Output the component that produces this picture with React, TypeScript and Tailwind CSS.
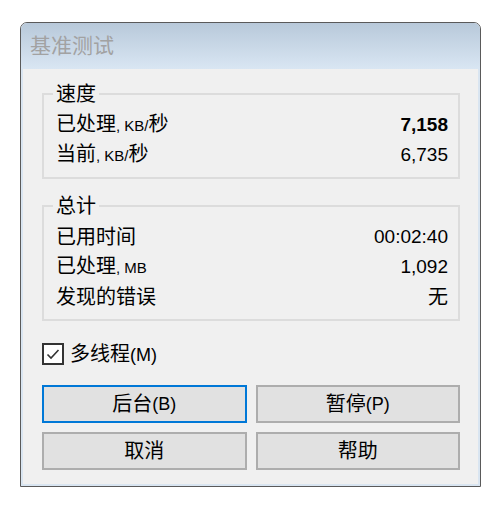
import React from "react";

const FONT = "font-['Liberation_Sans','Noto_Sans_CJK_SC',sans-serif]";

function Unit({ children }: { children: React.ReactNode }) {
  return <span className="text-[15px]">{children}</span>;
}

function Row({ label, value, bold }: { label: React.ReactNode; value: React.ReactNode; bold?: boolean }) {
  return (
    <div className="flex h-[30px] items-center justify-between pl-[3px]">
      <span className="text-[20px] leading-[30px]">{label}</span>
      <span className={`text-[19px] leading-[30px] ${bold ? "font-bold" : ""}`}>{value}</span>
    </div>
  );
}

function Group({ title, children }: { title: string; children: React.ReactNode }) {
  return (
    <div className="border-2 border-[#dcdcdc] pb-[7px] pl-[9px] pr-[10px]">
      <div className="-mt-[13px] w-fit bg-[#f0f0f0] px-[3px] text-[20px] leading-[24px]">{title}</div>
      <div className="mt-[4px]">{children}</div>
    </div>
  );
}

function Btn({ children, focused }: { children: React.ReactNode; focused?: boolean }) {
  return (
    <button
      className={`flex h-[38px] items-center justify-center border-2 bg-[#e1e1e1] text-[20px] text-black ${
        focused ? "border-[#0078d7]" : "border-[#adadad]"
      }`}
    >
      {children}
    </button>
  );
}

export default function App() {
  return (
    <div className={`min-h-[510px] bg-white pl-[20px] pt-[22px] text-black ${FONT}`}>
      <div className="w-[461px] overflow-hidden rounded-t-[7px] border border-[#5a5a5a]">
        <div className="flex h-[46px] items-center bg-gradient-to-b from-[#b8c9da] to-[#d9e6f3] pl-[9px] text-[21px] text-[#a2a2a2]">
          基准测试
        </div>
        <div className="border-x-2 border-b-2 border-[#d9e5f1] bg-[#f0f0f0] pb-[14px] pl-[19px] pr-[18px] pt-[24px]">
          <Group title="速度">
            <Row
              label={
                <>
                  已处理<Unit>, KB/</Unit>秒
                </>
              }
              value="7,158"
              bold
            />
            <Row
              label={
                <>
                  当前<Unit>, KB/</Unit>秒
                </>
              }
              value="6,735"
            />
          </Group>

          <div className="mt-[26px]">
            <Group title="总计">
              <Row label="已用时间" value="00:02:40" />
              <Row
                label={
                  <>
                    已处理<Unit>, MB</Unit>
                  </>
                }
                value="1,092"
              />
              <Row label="发现的错误" value={<span className="text-[20px]">无</span>} />
            </Group>
          </div>

          <label className="mt-[22px] flex h-[22px] items-center gap-[6px]">
            <span className="flex h-[22px] w-[22px] items-center justify-center border-2 border-[#333333] bg-white">
              <svg width="16" height="16" viewBox="0 0 16 16" fill="none">
                <path d="M2.5 8.5 L6 12 L13.5 4" stroke="#333333" strokeWidth="1.6" />
              </svg>
            </span>
            <span className="text-[20px] leading-[22px]">
              多线程<span className="text-[18px]">(M)</span>
            </span>
          </label>

          <div className="mt-[20px] grid grid-cols-2 gap-[9px]">
            <Btn focused>
              后台<span className="text-[18px]">(B)</span>
            </Btn>
            <Btn>
              暂停<span className="text-[18px]">(P)</span>
            </Btn>
            <Btn>取消</Btn>
            <Btn>帮助</Btn>
          </div>
        </div>
      </div>
    </div>
  );
}
